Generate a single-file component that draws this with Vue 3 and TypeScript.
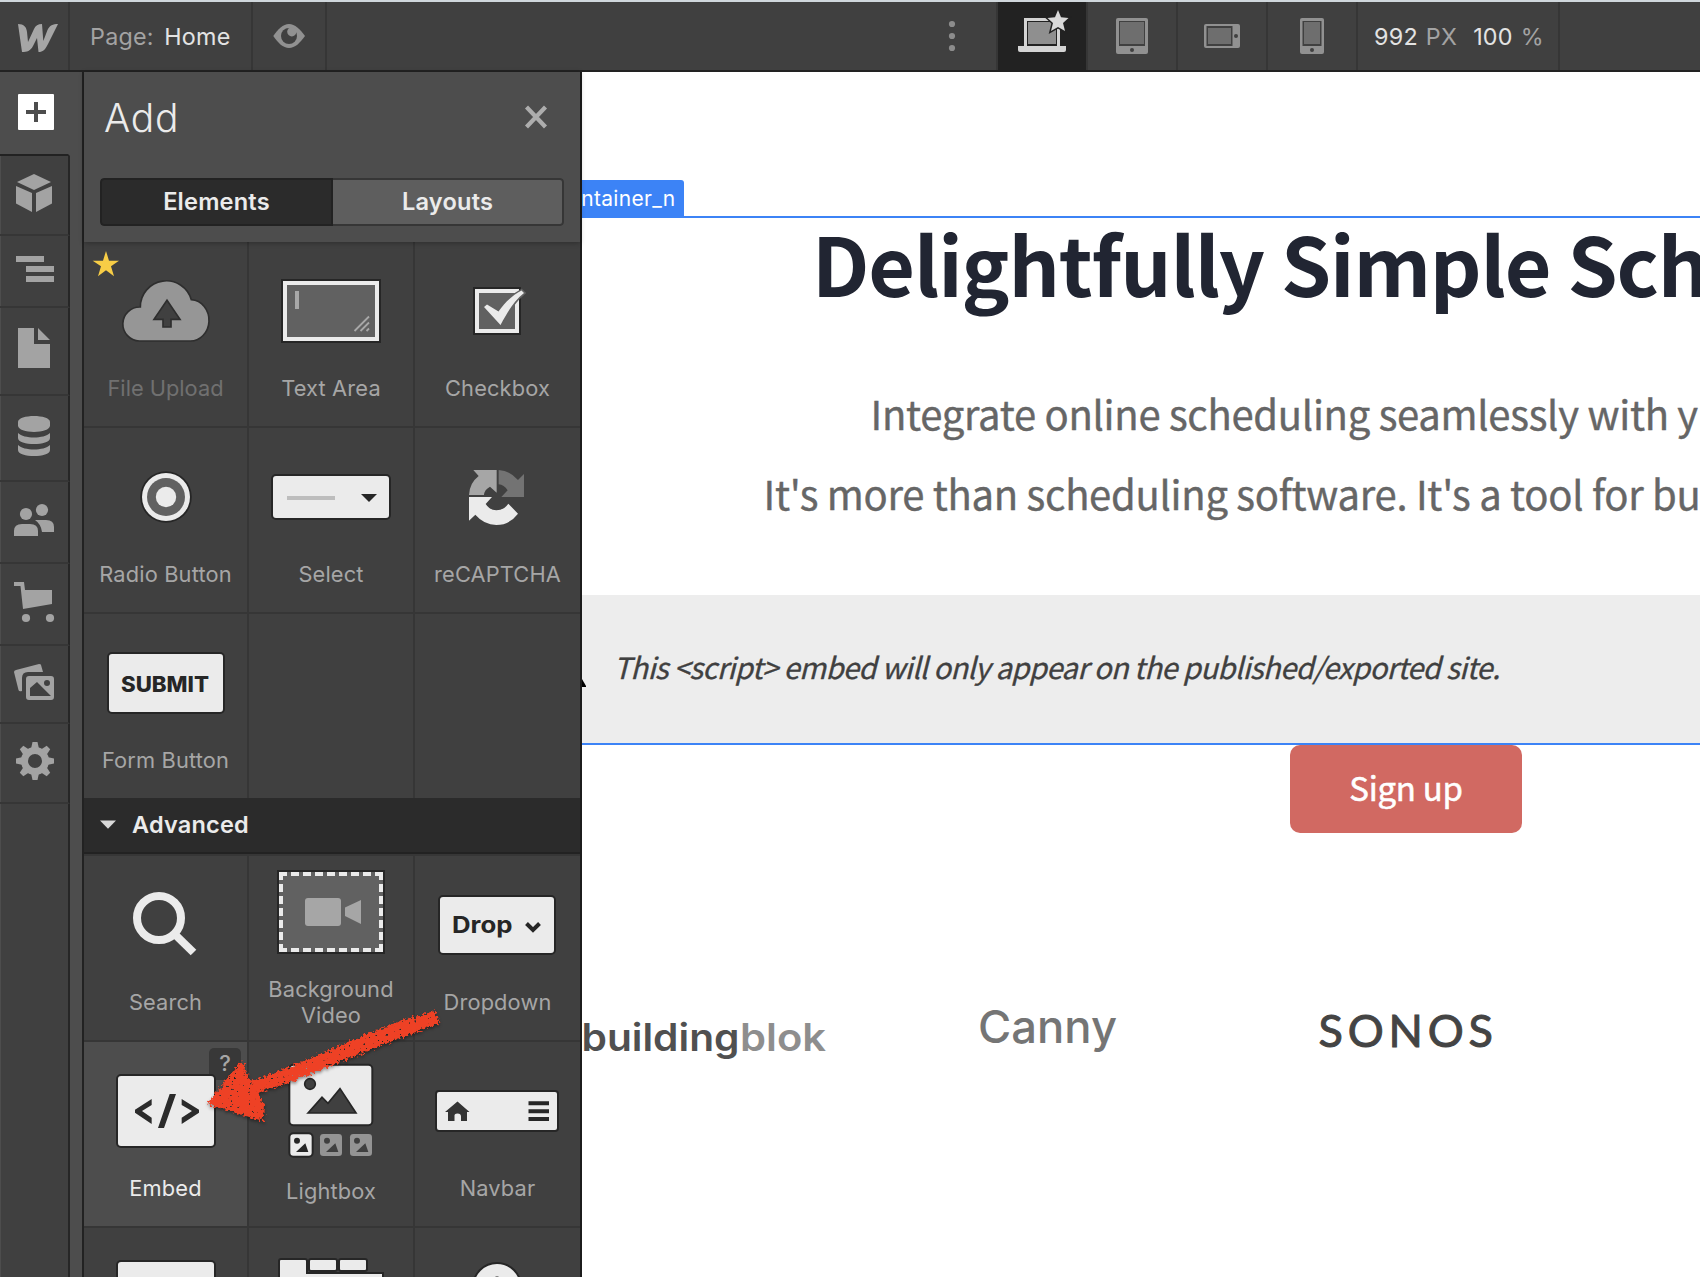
<script setup lang="ts">
const gearTeeth: number[] = [0, 45, 90, 135, 180, 225, 270, 315]
</script>

<template>
  <div class="app">
    <header class="topbar">
      <div class="tb logo">
        <svg width="67" height="68" viewBox="1 2 67 68"><path fill="#a6a6a6" d="M18 24C24 24 26.5 27 27 32L28 42L34 29C35.5 25.5 38 24 42 24L43.3 41L47.5 30C49.5 25.5 53 24 58 24L48 44C45 50 43 52 38.5 52L37 38L33 46C30.5 51 27 52 22 52Z" /></svg>
      </div>
      <div class="tb page"><span class="dim">Page:</span><span class="home">Home</span></div>
      <div class="tb eye">
        <svg width="72" height="68" viewBox="253 2 72 68">
          <path fill="#919191" d="M273.3 36C278 29 283 24 289 24S300 29 305 36C300 43 295 48 289 48S278 43 273.3 36Z" />
          <circle cx="289" cy="36" r="8" fill="#404040" /><circle cx="291.8" cy="31.8" r="4.6" fill="#919191" />
        </svg>
      </div>
      <div class="tb dots">
        <svg width="90" height="68" viewBox="906 2 90 68" fill="#8c8c8c"><circle cx="952" cy="24" r="3.1" /><circle cx="952" cy="36" r="3.1" /><circle cx="952" cy="48" r="3.1" /></svg>
      </div>
      <div class="tb device on">
        <svg width="88" height="68" viewBox="998 2 88 68">
          <rect x="1025.500" y="19.500" width="33" height="28" fill="#222" stroke="#d4d4d4" stroke-width="3" />
          <rect x="1028" y="22" width="28" height="22" fill="#8f8f8f" />
          <path fill="#d4d4d4" d="M1018 46H1066V50Q1066 52 1064 52H1020Q1018 52 1018 50Z" />
          <path fill="#d9d9d9" stroke="#222" stroke-width="3" paint-order="stroke" d="M1058 10L1061 17.300L1068.500 18L1063 23L1065 31L1058 27L1051 31L1053 23L1047.500 18L1055 17.300Z" />
        </svg>
      </div>
      <div class="tb device">
        <svg width="88" height="68" viewBox="1088 2 88 68">
          <rect x="1116" y="18" width="32" height="36" rx="2" fill="#919191" /><rect x="1119" y="21" width="26" height="25" fill="#404040" /><rect x="1120" y="22" width="24" height="22" fill="#6e6e6e" /><circle cx="1132" cy="50" r="2" fill="#404040" />
        </svg>
      </div>
      <div class="tb device">
        <svg width="88" height="68" viewBox="1178 2 88 68">
          <rect x="1204" y="24" width="36" height="24" rx="2" fill="#919191" /><rect x="1206.500" y="26" width="26" height="20" fill="#404040" /><rect x="1208" y="28" width="23" height="16" fill="#6e6e6e" /><circle cx="1236" cy="36" r="2" fill="#404040" />
        </svg>
      </div>
      <div class="tb device">
        <svg width="88" height="68" viewBox="1268 2 88 68">
          <rect x="1300" y="18" width="24" height="36" rx="2" fill="#919191" /><rect x="1302.500" y="21" width="19" height="25" fill="#404040" /><rect x="1304" y="22" width="16" height="22" fill="#6e6e6e" /><circle cx="1312" cy="50" r="2" fill="#404040" />
        </svg>
      </div>
      <div class="tb size"><span>992</span><span class="dim u1">PX</span><span class="n2">100</span><span class="dim u2">%</span></div>
    </header>

    <div class="body">
      <nav class="side">
        <div class="si first"><svg width="68" height="82" viewBox="0 72 68 82"><rect x="18" y="94" width="36" height="36" rx="1" fill="#fff" /><path d="M36 102V122M26 112H46" stroke="#4d4d4d" stroke-width="4" /></svg></div>
        <div class="si" style="height: 78px"><svg width="68" height="78" viewBox="0 156 68 78"><path d="M34 174L51 182L34 190L17 182ZM16 186L32 193V212L16 203.500ZM52 186L36 193V212L52 203.500Z" /></svg></div>
        <div class="si" style="height: 70px"><svg width="68" height="70" viewBox="0 236 68 70"><path d="M16 256H44V262H16ZM26 266H54V272H26ZM26 276H54V282H26Z" /></svg></div>
        <div class="si" style="height: 86px"><svg width="68" height="86" viewBox="0 308 68 86"><path d="M18 328H34V344H50V368H18ZM38 328L50 340H38Z" /></svg></div>
        <div class="si" style="height: 84px"><svg width="68" height="84" viewBox="0 396 68 84"><path d="M18 422C18 414 50 414 50 422V425.500C50 434 18 434 18 425.500ZM18 433C24 439 44 439 50 433V438C50 446 18 446 18 438ZM18 445C24 451 44 451 50 445V450C50 458 18 458 18 450Z" /></svg></div>
        <div class="si" style="height: 80px"><svg width="68" height="80" viewBox="0 482 68 80"><circle cx="26" cy="514" r="6.100" /><circle cx="42" cy="510" r="6.100" /><path d="M14 536V531Q14 524 22 524H30Q38 524 38 531V536ZM35 520H46Q54 520 54 527V532H42Q41 524 35 520Z" /></svg></div>
        <div class="si" style="height: 80px"><svg width="68" height="80" viewBox="0 564 68 80"><path d="M14 582H24L25 590H52V604L23 609L20.500 586H14Z" /><circle cx="26" cy="618" r="4.100" /><circle cx="50" cy="618" r="4.100" /></svg></div>
        <div class="si" style="height: 76px"><svg width="68" height="76" viewBox="0 646 68 76"><path d="M16 670L39 664Q41 664 41 665L43 672H28Q22 672 22 678V691Q19 692 18.500 690L14 672Q14 670.500 16 670Z" /><path fill-rule="evenodd" d="M29 676H51Q54 676 54 679V697Q54 700 51 700H29Q26 700 26 697V679Q26 676 29 676ZM30 688V696H51L37 682ZM47 680A3 3 0 1 0 47 686A3 3 0 1 0 47 680Z" /></svg></div>
        <div class="si" style="height: 78px"><svg width="68" height="78" viewBox="0 724 68 78"><circle cx="35" cy="761" r="10.500" fill="none" stroke="#a3a3a3" stroke-width="7" /><path v-for="a in gearTeeth" :key="a" d="M31 749L32.500 742H37.500L39 749Z" :transform="`rotate(${a} 35 761)`" /></svg></div>
      </nav>
      <div class="gutter"></div>

      <section class="panel">
        <div class="head">
          <div class="titlebar"><h1>Add</h1><svg width="24" height="24" viewBox="0 0 24 24"><path d="M2.500 2L21.500 22M21.500 2L2.500 22" stroke="#adadad" stroke-width="4.200" /></svg></div>
          <div class="tabs"><div class="tab sel">Elements</div><div class="tab">Layouts</div></div>
        </div>

        <div class="grid g1">
          <div class="tile off">
            <svg width="163" height="133" viewBox="84 242 163 133"><g transform="translate(80 235) scale(.33333)">
              <path fill="#f7cd46" d="M78 48L87 77H117L93 94L102 124L78 106L54 124L63 94L38 77H69Z" />
              <path fill="#969696" stroke="#2e2e2e" stroke-width="5" d="M178 318H328A56 62 0 0 0 334 194A78 78 0 0 0 181 216A51 51 0 0 0 178 318Z" />
              <path fill="#404040" stroke="#2e2e2e" stroke-width="5" d="M261 196L300 253H273V276H249V253H222Z" />
            </g></svg><span>File Upload</span>
          </div>
          <div class="tile">
            <svg width="164" height="133" viewBox="249 242 164 133">
              <rect x="281" y="279" width="100" height="64" fill="#262626" /><rect x="283" y="281" width="96" height="60" fill="#ebebeb" /><rect x="287" y="285" width="88" height="52" fill="#616161" /><rect x="295" y="291" width="4" height="18" fill="#a8a8a8" />
              <path d="M354.500 331L369 316.500M360.500 331L369 322.500M366.500 331L369 328.500" stroke="#a8a8a8" stroke-width="1.800" />
            </svg><span>Text Area</span>
          </div>
          <div class="tile">
            <svg width="165" height="133" viewBox="415 242 165 133">
              <rect x="473" y="287" width="48" height="48" fill="#262626" /><rect x="475" y="289" width="44" height="44" fill="#ebebeb" /><rect x="479" y="293" width="36" height="36" fill="#616161" />
              <path fill="#ebebeb" stroke="#616161" stroke-width="3" paint-order="stroke" d="M484 307L487 304.500L498.500 311.500C505 302 513 295 521.500 290.500L524 293C514 301 508 311 500.500 325Z" />
            </svg><span>Checkbox</span>
          </div>
          <div class="tile">
            <svg width="163" height="133" viewBox="84 428 163 133"><circle cx="166" cy="497" r="25.800" fill="#262626" /><circle cx="166" cy="497" r="24" fill="#ebebeb" /><circle cx="166" cy="497" r="19" fill="#616161" /><circle cx="166" cy="497" r="10.200" fill="#ebebeb" /></svg><span>Radio Button</span>
          </div>
          <div class="tile">
            <svg width="164" height="133" viewBox="249 428 164 133"><rect x="272" y="475" width="118" height="44" rx="4" fill="#ebebeb" stroke="#262626" stroke-width="2" /><rect x="287" y="496" width="48" height="4" fill="#bdbdbd" /><path d="M361 494H377L369 502Z" fill="#262626" /></svg><span>Select</span>
          </div>
          <div class="tile">
            <svg width="165" height="133" viewBox="415 428 165 133"><g transform="translate(80 420) scale(.33333)">
              <path fill="#a6a6a6" d="M1180 150H1250V218L1230 200Q1213 209 1212 225H1167Q1168 190 1196 168Z" />
              <path fill="#737373" d="M1256 150Q1290 152 1314 180L1332 162V231H1264L1283 211Q1272 195 1256 193Z" />
              <path fill="#ebebeb" d="M1167 231H1236L1217 252Q1230 271 1249 271Q1272 270 1285 251L1314 281Q1288 315 1249 315Q1212 314 1186 284L1167 302Z" />
            </g></svg><span>reCAPTCHA</span>
          </div>
          <div class="tile">
            <svg width="163" height="133" viewBox="84 614 163 133"><rect x="108" y="653" width="116" height="60" rx="4" fill="#ebebeb" stroke="#262626" stroke-width="2" /><text x="121" y="692" class="chip" textLength="88" lengthAdjust="spacingAndGlyphs">SUBMIT</text></svg><span>Form Button</span>
          </div>
          <div class="tile"></div>
          <div class="tile"></div>
        </div>

        <div class="cat"><svg width="16" height="9" viewBox="0 0 16 9"><path d="M0 .5H16L8 8.800Z" fill="#d9d9d9" /></svg><span>Advanced</span></div>

        <div class="grid g2">
          <div class="tile">
            <svg width="163" height="133" viewBox="84 856 163 133"><circle cx="159" cy="918" r="22" fill="none" stroke="#ebebeb" stroke-width="8" /><path d="M174.500 934L193.500 952.500" stroke="#ebebeb" stroke-width="8" /></svg><span>Search</span>
          </div>
          <div class="tile">
            <svg width="164" height="120" viewBox="249 856 164 120"><rect x="277" y="870" width="108" height="84" fill="#262626" /><rect x="279" y="872" width="104" height="80" fill="#616161" />
              <path d="M279 874H383M279 950H383" stroke="#ebebeb" stroke-width="4" stroke-dasharray="8 4" /><path d="M281 872V952M381 872V952" stroke="#ebebeb" stroke-width="4" stroke-dasharray="8 4" />
              <rect x="305" y="898" width="36" height="28" rx="3" fill="#a6a6a6" /><path d="M345 907.500L361 900V924L345 916Z" fill="#a6a6a6" /></svg><span>Background<br />Video</span>
          </div>
          <div class="tile">
            <svg width="165" height="133" viewBox="415 856 165 133"><rect x="439" y="896" width="116" height="58" rx="4" fill="#ebebeb" stroke="#262626" stroke-width="2" /><text x="452" y="933" class="chip drop" textLength="60.500" lengthAdjust="spacingAndGlyphs">Drop</text><path d="M526.500 923.500L533 930L539.500 923.500" fill="none" stroke="#262626" stroke-width="4" /></svg><span>Dropdown</span>
          </div>
          <div class="tile hot">
            <svg width="163" height="133" viewBox="84 1042 163 133"><rect x="209" y="1048" width="32" height="32" rx="5" fill="#383838" /><text x="225" y="1071" text-anchor="middle" class="q">?</text>
              <rect x="117" y="1075" width="98" height="72" rx="4" fill="#ebebeb" stroke="#262626" stroke-width="2" />
              <g transform="translate(80 1030) scale(.33333)" fill="#2b2b2b"><path d="M165 239L215 207V225L186 243L215 263V282L165 248ZM305 207L357 239V248L305 282V263L336 243L305 225ZM269 192H288L252 294H234Z" /></g></svg><span>Embed</span>
          </div>
          <div class="tile">
            <svg width="164" height="136" viewBox="249 1042 164 136"><g transform="translate(80 1030) scale(.33333)">
              <rect x="628" y="104" width="249" height="182" rx="12" fill="#ebebeb" stroke="#262626" stroke-width="6" />
              <circle cx="690" cy="162" r="16" fill="#404040" stroke="#262626" stroke-width="5" /><path d="M684 249L726 202L744 220L780 176L828 249Z" fill="#404040" stroke="#262626" stroke-width="5" />
              <rect x="628" y="310" width="70" height="70" rx="12" fill="#ebebeb" stroke="#262626" stroke-width="6" /><rect x="720" y="312" width="66" height="66" rx="10" fill="#949494" /><rect x="810" y="312" width="66" height="66" rx="10" fill="#949494" />
              <g fill="#262626"><circle cx="651" cy="332" r="9" /><path d="M648 366L676 340L685 366Z" /></g><g fill="#404040"><circle cx="741" cy="332" r="9" /><path d="M738 366L766 340L775 366Z" /><circle cx="831" cy="332" r="9" /><path d="M828 366L856 340L865 366Z" /></g>
            </g></svg><span>Lightbox</span>
          </div>
          <div class="tile">
            <svg width="165" height="133" viewBox="415 1042 165 133"><rect x="436" y="1091" width="122" height="40" rx="3" fill="#ebebeb" stroke="#262626" stroke-width="2" />
              <path d="M445 1112L457.500 1101.500L469.500 1112H467V1121H461V1116.500Q461 1113.500 457.500 1113.500T454.500 1116.500V1121H448V1112Z" fill="#333" /><path d="M528.500 1103.200H549M528.500 1111.200H549M528.500 1119H549" stroke="#262626" stroke-width="4" /></svg><span>Navbar</span>
          </div>
          <div class="tile last"><svg width="163" height="49" viewBox="84 1228 163 49"><rect x="117" y="1261" width="98" height="72" rx="4" fill="#ebebeb" stroke="#262626" stroke-width="2" /></svg></div>
          <div class="tile last"><svg width="164" height="49" viewBox="249 1228 164 49"><g fill="#ebebeb" stroke="#262626" stroke-width="2"><rect x="309" y="1259" width="28" height="12" rx="2" /><rect x="339" y="1259" width="28" height="12" rx="2" /><path d="M279 1290V1261Q279 1259 281 1259H305Q307 1259 307 1261V1273H383V1290Z" /></g></svg></div>
          <div class="tile last"><svg width="165" height="49" viewBox="415 1228 165 49"><circle cx="497" cy="1287" r="24" fill="#ebebeb" stroke="#262626" stroke-width="2" /><rect x="495.500" y="1276" width="3" height="4" fill="#888" /></svg></div>
        </div>
      </section>

      <main class="canvas">
        <div class="tagrow"><div class="tag">ntainer_n</div></div>
        <div class="sel-box">
          <h2>Delightfully Simple Sch</h2>
          <div class="copy"><p class="p1">Integrate online scheduling seamlessly with y</p><p class="p2">It's more than scheduling software. It's a tool for bu</p></div>
          <div class="embed"><svg width="6" height="10" viewBox="0 0 6 10"><path d="M0 0L4 7V8H0Z" /></svg><em>This &lt;script&gt; embed will only appear on the published/exported site.</em></div>
        </div>
        <div class="cta">Sign up</div>
        <svg class="brands" width="1118" height="100" viewBox="582 980 1118 100">
          <text x="581.500" y="1050.500" class="bb" fill="#505050" textLength="158" lengthAdjust="spacingAndGlyphs">building</text>
          <text x="740" y="1050.500" class="bb" fill="#8e8e8e" textLength="86" lengthAdjust="spacingAndGlyphs">blok</text>
          <text x="978" y="1043" class="canny" textLength="139" lengthAdjust="spacingAndGlyphs">Canny</text>
          <text x="1318.500" y="1046.500" class="sonos" textLength="174.500" lengthAdjust="spacing">SONOS</text>
        </svg>
      </main>
    </div>

    <svg class="arrow" width="280" height="140" viewBox="190 1000 280 140">
      <defs>
        <filter id="crayon" x="-10%" y="-10%" width="120%" height="130%" color-interpolation-filters="sRGB">
          <feTurbulence type="fractalNoise" baseFrequency=".35" numOctaves="2" seed="4" result="n" />
          <feDisplacementMap in="SourceGraphic" in2="n" scale="9" xChannelSelector="R" yChannelSelector="G" result="d" />
          <feColorMatrix in="n" type="matrix" values="0 0 0 0 0  0 0 0 0 0  0 0 0 0 0  0 0 14 0 -3.1" result="holes" />
          <feComposite in="d" in2="holes" operator="in" result="c" />
          <feDropShadow in="c" dx="0" dy="2" stdDeviation="1.500" flood-color="#000" flood-opacity=".4" />
        </filter>
      </defs>
      <g filter="url(#crayon)" fill="#ee4125">
        <path d="M252 1081L290 1067L350 1041L400 1021L435 1011L440 1023L400 1038L340 1062L290 1082L256 1094Z" />
        <path d="M207 1104L242 1060L250 1080L258 1092L264 1105L263 1121L246 1116Z" />
      </g>
    </svg>
  </div>
</template>

<style>
body { background: #404040; overflow: hidden; }
</style>

<style scoped>
.app { position: relative; width: 1700px; height: 1277px; overflow: hidden; display: flex; flex-direction: column; font-family: Inter, "Liberation Sans", sans-serif; background: #404040; }
svg { display: block; flex: none; }
.topbar { box-sizing: border-box; height: 72px; flex: none; border-top: 2px solid #d0d7dc; border-bottom: 2px solid #222; background: #404040; display: flex; padding-left: 1px; }
.tb { box-sizing: border-box; height: 68px; border-right: 2px solid #363636; display: flex; align-items: center; font-size: 23.300px; letter-spacing: .25px; color: #e3e3e3; white-space: nowrap; }
.logo { width: 69px; }
.page { width: 183px; padding-left: 20px; padding-top: 1px; }
.page .home { margin-left: 10.500px; }
.dim { color: #a3a3a3; }
.eye { width: 74px; }
.dots { margin-left: auto; width: 92px; }
.device { width: 90px; }
.on { background: #222; }
.size { width: 202px; margin-right: 140px; padding-left: 16px; padding-top: 1px; }
.u1 { margin-left: 8px; }
.n2 { margin-left: 16px; }
.u2 { margin-left: 8px; }
.body { display: flex; height: 1205px; }
.side { width: 70px; display: flex; flex-direction: column; box-shadow: inset 1px 0 #4d4d4d; }
.si { box-sizing: content-box; border-bottom: 2px solid #363636; border-right: 2px solid #262626; fill: #a3a3a3; }
.first { height: 82px; border-right: 2px solid #4d4d4d; border-bottom-color: #222; background: #4d4d4d; }
.side::after { content: ""; flex: 1; border-right: 2px solid #262626; }
.gutter { width: 12px; background: #4d4d4d; }
.panel { box-sizing: border-box; width: 500px; flex: none; border-left: 2px solid #222; border-right: 2px solid #1c1c1c; background: #404040; }
.head { height: 170px; background: #4d4d4d; box-shadow: 0 1px 5px rgba(0, 0, 0, .3); position: relative; }
.titlebar { display: flex; align-items: center; justify-content: space-between; height: 90px; padding: 0 32px 0 20px; }
h1 { margin: 0; font-size: 39px; letter-spacing: .7px; font-weight: 350; color: #ebebeb; }
.tabs { display: flex; margin: 16px; height: 48px; border-radius: 4px; overflow: hidden; }
.tab { flex: 1; box-sizing: border-box; border: 2px solid #363636; border-left: 0; border-radius: 0 4px 4px 0; background: #5e5e5e; color: #ebebeb; font-size: 23.600px; letter-spacing: .2px; font-weight: 600; text-align: center; line-height: 43px; }
.sel { background: #2b2b2b; border: 2px solid #222; border-radius: 4px 0 0 4px; }
.grid { display: grid; grid-template-columns: 163px 164px 165px; column-gap: 2px; row-gap: 2px; background: #363636; }
.g1 { grid-template-rows: repeat(3, 184px); }
.g2 { grid-template-rows: 184px 184px 49px; border-top: 2px solid #363636; }
.tile { background: #404040; display: flex; flex-direction: column; align-items: center; overflow: hidden; }
.tile span { font-size: 21.800px; line-height: 26px; letter-spacing: .15px; color: #a6a6a6; text-align: center; white-space: nowrap; }
.off span { color: #707070; letter-spacing: 0; }
.hot { background: #4d4d4d; }
.hot span { color: #ebebeb; }
.chip { font-family: Inter, sans-serif; font-weight: 800; font-size: 21.500px; fill: #262626; }
.drop { font-weight: 700; font-size: 22.500px; }
.q { font-size: 22px; font-weight: 500; fill: #a6a6a6; }
.cat { box-sizing: border-box; height: 56px; background: #2b2b2b; border-bottom: 2px solid #222; display: flex; align-items: center; padding: 0 0 2px 16px; gap: 16px; color: #ebebeb; font-size: 23.500px; letter-spacing: .2px; font-weight: 600; }
.canvas { flex: 1; min-width: 0; background: #fff; overflow: hidden; font-family: "Noto Sans CJK SC", sans-serif; }
.tagrow { margin-top: 108px; height: 36px; display: flex; }
.tag { box-sizing: border-box; width: 102px; background: #3c83f6; color: #fff; border-radius: 0 3px 0 0; padding-right: 8.500px; font: 21px/38px Inter, sans-serif; letter-spacing: .3px; display: flex; justify-content: flex-end; white-space: nowrap; }
.sel-box { border-top: 2px solid #3c83f6; border-bottom: 2px solid #3c83f6; height: 525px; display: flex; flex-direction: column; justify-content: space-between; }
h2 { margin: 0 0 0 230px; font-size: 80.500px; line-height: 88px; height: 88px; font-weight: 600; letter-spacing: -1.150px; color: #212532; white-space: nowrap; }
.copy { margin-top: 4px; }
.copy p { margin: 0; font-size: 40px; line-height: 80px; letter-spacing: -.29px; -webkit-text-stroke: .4px #666; color: #666; white-space: nowrap; }
.copy .p1 { padding-left: 288.500px; }
.copy .p2 { padding-left: 181.500px; }
.embed { height: 148px; background: #ededed; display: flex; align-items: center; }
.embed svg { margin-top: 30px; }
.embed em { margin-left: 25.500px; font-size: 29.200px; line-height: 40px; letter-spacing: -.63px; -webkit-text-stroke: .3px #404040; color: #404040; white-space: nowrap; padding-bottom: 6px; }
.cta { margin-left: 708px; width: 232px; height: 88px; border-radius: 10px; background: #d16962; color: #fff; font-size: 33px; letter-spacing: -.3px; -webkit-text-stroke: .5px #fff; line-height: 84px; text-align: center; }
.brands { margin-top: 147px; }
.bb { font-family: Inter, sans-serif; font-weight: 600; font-size: 38px; }
.canny { font-family: Inter, sans-serif; font-weight: 500; font-size: 45px; fill: #757575; }
.sonos { font-family: Lato, sans-serif; font-weight: 400; font-size: 45px; fill: #444; stroke: #444; stroke-width: 1px; }
.arrow { position: absolute; left: 190px; top: 1000px; }
</style>
